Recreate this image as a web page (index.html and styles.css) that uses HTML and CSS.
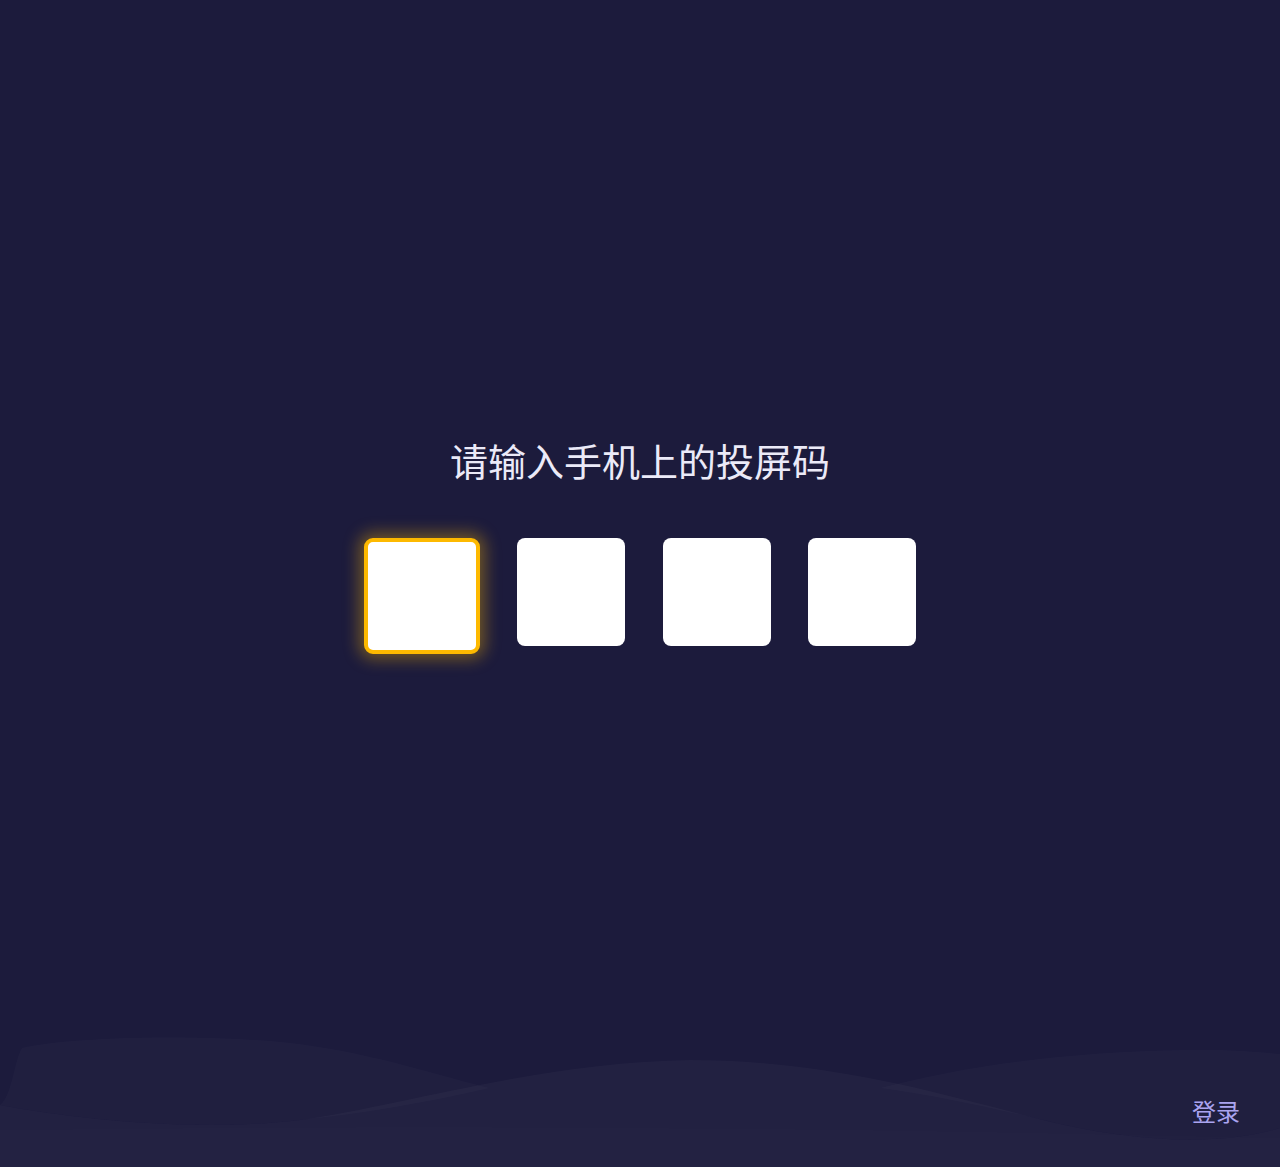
FILE: index.html
```html
<!DOCTYPE html>
<html lang="zh-CN">
<head>
<meta charset="utf-8">
<title>投屏码</title>
<link rel="stylesheet" href="styles.css">
</head>
<body>
<div class="page">
  <svg class="waves" viewBox="0 0 1280 167" preserveAspectRatio="none" aria-hidden="true">
    <path class="w1" d="M22 48 C60 38 200 32 300 44 C380 55 440 76 490 88 C420 104 360 114 300 120 C200 132 80 120 0 105 C12 96 14 60 22 48 Z"/>
    <path class="w3" d="M880 88 C980 62 1080 52 1180 50 C1230 49 1260 52 1280 54 L1280 128 C1220 146 1140 142 1060 124 C1000 110 940 96 880 88 Z"/>
    <path class="w2" d="M0 105 C80 120 200 132 300 120 C400 106 540 62 690 60 C840 60 960 100 1060 124 C1140 142 1220 146 1280 128 L1280 167 L0 167 Z"/>
    <path class="w4" d="M0 130 C300 126 700 124 1280 138 L1280 167 L0 167 Z"/>
  </svg>
  <main class="content">
    <h1 class="title">请输入手机上的投屏码</h1>
    <div class="codes">
      <div class="code active"></div>
      <div class="code"></div>
      <div class="code"></div>
      <div class="code"></div>
    </div>
  </main>
  <footer class="footer">
    <a class="login">登录</a>
  </footer>
</div>
</body>
</html>
```

FILE: styles.css
```css
html, body {
  margin: 0;
  padding: 0;
}
body {
  background: #1c1b3c;
  font-family: "Noto Sans CJK SC", "Noto Sans", sans-serif;
}
.page {
  position: relative;
  height: 1167px;
  display: flex;
  flex-direction: column;
  overflow: hidden;
}
.waves {
  position: absolute;
  left: 0;
  bottom: 0;
  width: 1280px;
  height: 167px;
  z-index: 0;
}
.waves path {
  fill: #ffffff;
}
.w1 { opacity: 0.018; }
.w2 { opacity: 0.026; }
.w3 { opacity: 0.018; }
.w4 { opacity: 0.008; }
.content {
  position: relative;
  z-index: 1;
  flex: 1;
  display: flex;
  flex-direction: column;
  align-items: center;
  padding-top: 436px;
}
.title {
  margin: 0;
  font-size: 38px;
  line-height: 48px;
  font-weight: 400;
  color: #ebeaf8;
}
.codes {
  margin-top: 54px;
  display: flex;
  align-items: flex-start;
  gap: 37.33px;
}
.code {
  width: 108px;
  height: 108px;
  background: #ffffff;
  border-radius: 8px;
}
.code.active {
  border: 4px solid #fdb900;
  border-radius: 9px;
  box-shadow: 0 0 16px 5px rgba(253, 185, 0, 0.38);
}
.footer {
  position: relative;
  z-index: 1;
  display: flex;
  justify-content: flex-end;
  padding: 0 40px 44px 0;
}
.login {
  font-size: 24px;
  line-height: 24px;
  color: #aaa4f0;
  cursor: pointer;
}
```
